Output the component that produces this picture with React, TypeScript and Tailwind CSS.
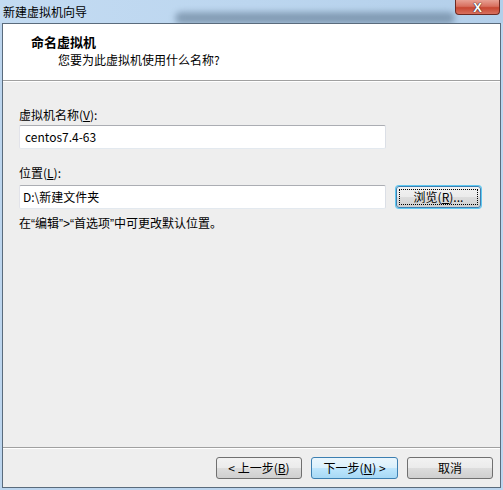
import React from "react";

const font = { fontFamily: '"Noto Sans CJK SC", "Liberation Sans", sans-serif' };
const latin = { fontFamily: '"Liberation Sans", sans-serif' };

function Btn({ children, variant = "normal", className = "" }: { children: React.ReactNode; variant?: "normal" | "default" | "focus"; className?: string }) {
  const base =
    variant === "default"
      ? "border-[#3c7fb1] bg-[linear-gradient(to_bottom,#eaf6fd_0%,#d9f0fc_50%,#bee6fd_51%,#a7d9f5_100%)]"
      : variant === "focus"
      ? "border-[#3c7fb1] shadow-[0_0_0_1px_#5ec8f1] bg-[linear-gradient(to_bottom,#f2f2f2_0%,#ebebeb_50%,#dddddd_51%,#cfcfcf_100%)]"
      : "border-[#707070] bg-[linear-gradient(to_bottom,#f2f2f2_0%,#ebebeb_50%,#dddddd_51%,#cfcfcf_100%)]";
  return (
    <div className={`h-[22px] rounded-[3px] border flex items-center justify-center text-[12px] text-black relative ${base} ${className}`}>
      {variant === "focus" && <div className="absolute inset-[2px] border border-dotted border-black" />}
      <span className="relative leading-none">{children}</span>
    </div>
  );
}

export default function App() {
  return (
    <div className="w-[503px] h-[490px] bg-[#bcd5ee] flex flex-col relative overflow-hidden" style={font}>
      {/* title bar */}
      <div className="h-[23px] flex items-center pl-[3px] bg-[linear-gradient(to_right,#c3dbf2,#bcd6ef_50%,#b3cfea)] relative">
        <span className="text-[12px] text-black leading-none relative z-10">新建虚拟机向导</span>
        <div className="absolute left-[175px] top-[12px] w-[280px] h-[12px] bg-[#5f7890] opacity-60 blur-[3px] rounded-full" />
        <div className="absolute right-[3px] top-0 w-[45px] h-[15px] rounded-b-[4px] border border-t-0 border-[#6e2a22] bg-[linear-gradient(to_bottom,#e8a093_0%,#d8705f_45%,#c74732_55%,#d8705f_100%)] flex items-center justify-center">
          <span className="text-white font-bold text-[13px] leading-none" style={{ fontFamily: '"Liberation Sans", sans-serif', textShadow: "0 0 1px #222, 0 0 1px #222" }}>X</span>
        </div>
      </div>
      {/* client */}
      <div className="flex-1 mx-[2px] mb-[2px] border border-[#5a6b7c] flex flex-col bg-[#eeeeee] relative z-10">
        <div className="h-[57px] bg-white border-b border-[#a0a0a0] flex flex-col pt-[10px]">
          <div className="pl-[28px] text-[13px] font-bold text-black leading-[16px]">命名虚拟机</div>
          <div className="pl-[55px] mt-[2px] text-[12px] text-black leading-[16px]">您要为此虚拟机使用什么名称?</div>
        </div>
        <div className="h-px bg-white" />
        <div className="flex-1 flex flex-col px-[16px] pt-[25px]">
          <div className="text-[12px] leading-[16px] text-black">
            虚拟机名称(<span className="underline">V</span>):
          </div>
          <div className="mt-[2px] w-[367px] h-[24px] bg-white border border-[#abadb3] border-b-[#e3e9ef] border-l-[#e2e3ea] border-r-[#dbdfe6] rounded-[2px] flex items-center pl-[5px] text-[12px] text-black">
            centos7.4-63
          </div>
          <div className="mt-[16px] text-[12px] leading-[16px] text-black">
            位置(<span className="underline">L</span>):
          </div>
          <div className="mt-[4px] flex items-center">
            <div className="w-[367px] h-[24px] bg-white border border-[#abadb3] border-b-[#e3e9ef] border-l-[#e2e3ea] border-r-[#dbdfe6] rounded-[2px] flex items-center pl-[3px] text-[12px] text-black">
              D:\新建文件夹
            </div>
            <Btn variant="focus" className="ml-[10px] w-[85px]">
              浏览(<span className="underline">R</span>)...
            </Btn>
          </div>
          <div className="mt-[6px] text-[12px] leading-[16px] text-black">
            在<span style={latin}>“</span>编辑<span style={latin}>”&gt;“</span>首选项<span style={latin}>”</span>中可更改默认位置。
          </div>
        </div>
        <div className="h-[2px] border-t border-[#a0a0a0] bg-white" />
        <div className="h-[38px] flex items-start pt-[8px] pl-[213px] gap-[9px]">
          <Btn className="w-[86px]">
            &lt; 上一步(<span className="underline">B</span>)
          </Btn>
          <Btn variant="default" className="w-[87px]">
            下一步(<span className="underline">N</span>) &gt;
          </Btn>
          <Btn className="w-[86px]">取消</Btn>
        </div>
      </div>
    </div>
  );
}
